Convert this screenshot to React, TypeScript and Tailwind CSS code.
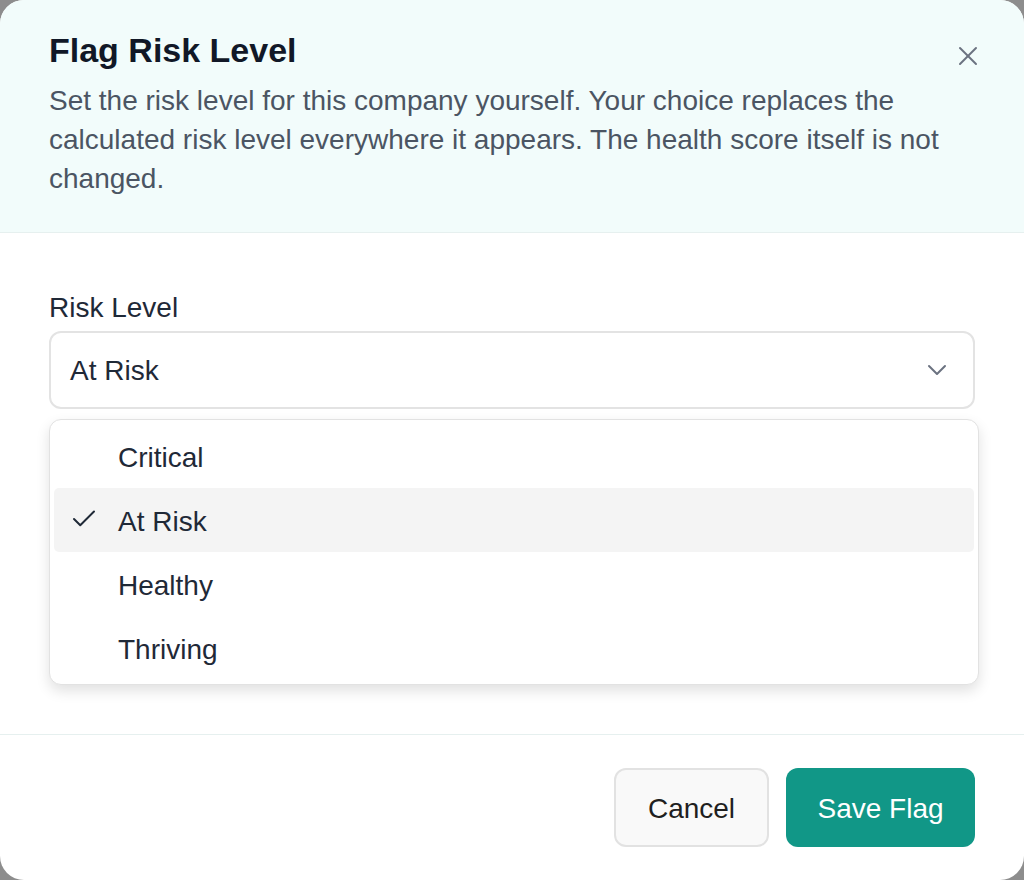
import { Check, ChevronDown, X } from "lucide-react";

const options = ["Critical", "At Risk", "Healthy", "Thriving"];

export default function App() {
  const selected = "At Risk";

  return (
    <div className="w-[1024px] h-[880px] bg-[#8d8d8d] font-['Liberation_Sans',Arial,sans-serif]">
      <div className="relative flex flex-col w-full h-full bg-white rounded-[24px] overflow-hidden">
        {/* Header */}
        <div className="bg-[#f2fcfb] border-b border-[#e6f0ef] px-[49px] pt-[30px] pb-[34px]">
          <h2 className="text-[34px] leading-[40px] font-bold text-[#111827]">Flag Risk Level</h2>
          <p className="mt-[11px] text-[28px] leading-[39px] text-[#4b5563]">
            Set the risk level for this company yourself. Your choice replaces the calculated risk level
            everywhere it appears. The health score itself is not changed.
          </p>
          <button className="absolute top-[40px] right-[40px] text-[#6b7280]">
            <X className="w-[32px] h-[32px]" strokeWidth={1.5} />
          </button>
        </div>

        {/* Body */}
        <div className="flex-1 px-[49px] pt-[55px]">
          <label className="block text-[28px] leading-[40px] text-[#1f2937]">Risk Level</label>
          <div className="mt-[3px] flex items-center justify-between h-[78px] border-2 border-[#e3e3e3] rounded-[12px] pl-[19px] pr-[20px]">
            <span className="pt-[2px] text-[28px] text-[#1f2937]">{selected}</span>
            <ChevronDown className="w-[32px] h-[32px] text-[#6b7280]" strokeWidth={1.5} />
          </div>

          {/* Options menu */}
          <div className="mt-[10px] -mr-[4px] border-[1.5px] border-[#e2e2e2] rounded-[12px] bg-white p-1 shadow-[0_6px_14px_rgba(0,0,0,0.12)]">
            {options.map((opt) => (
              <div
                key={opt}
                className={`relative flex items-center h-[64px] pl-[64px] pt-[3px] rounded-[5px] text-[28px] text-[#1f2937] ${
                  opt === selected ? "bg-[#f4f4f4]" : ""
                }`}
              >
                {opt === selected && (
                  <Check className="absolute left-[15px] top-[16px] w-[30px] h-[30px] text-[#1f2937]" strokeWidth={1.6} />
                )}
                {opt}
              </div>
            ))}
          </div>
        </div>

        {/* Footer */}
        <div className="flex justify-end gap-[17px] border-t border-[#e6f0ef] px-[49px] py-[33px]">
          <button className="w-[155px] h-[79px] pt-[2px] rounded-[12px] border-2 border-[#e2e2e2] bg-[#f9f9f9] text-[28px] text-[#1f1f1f]">
            Cancel
          </button>
          <button className="w-[189px] h-[79px] pt-[2px] rounded-[12px] bg-[#119787] text-[28px] text-white">
            Save Flag
          </button>
        </div>
      </div>
    </div>
  );
}
